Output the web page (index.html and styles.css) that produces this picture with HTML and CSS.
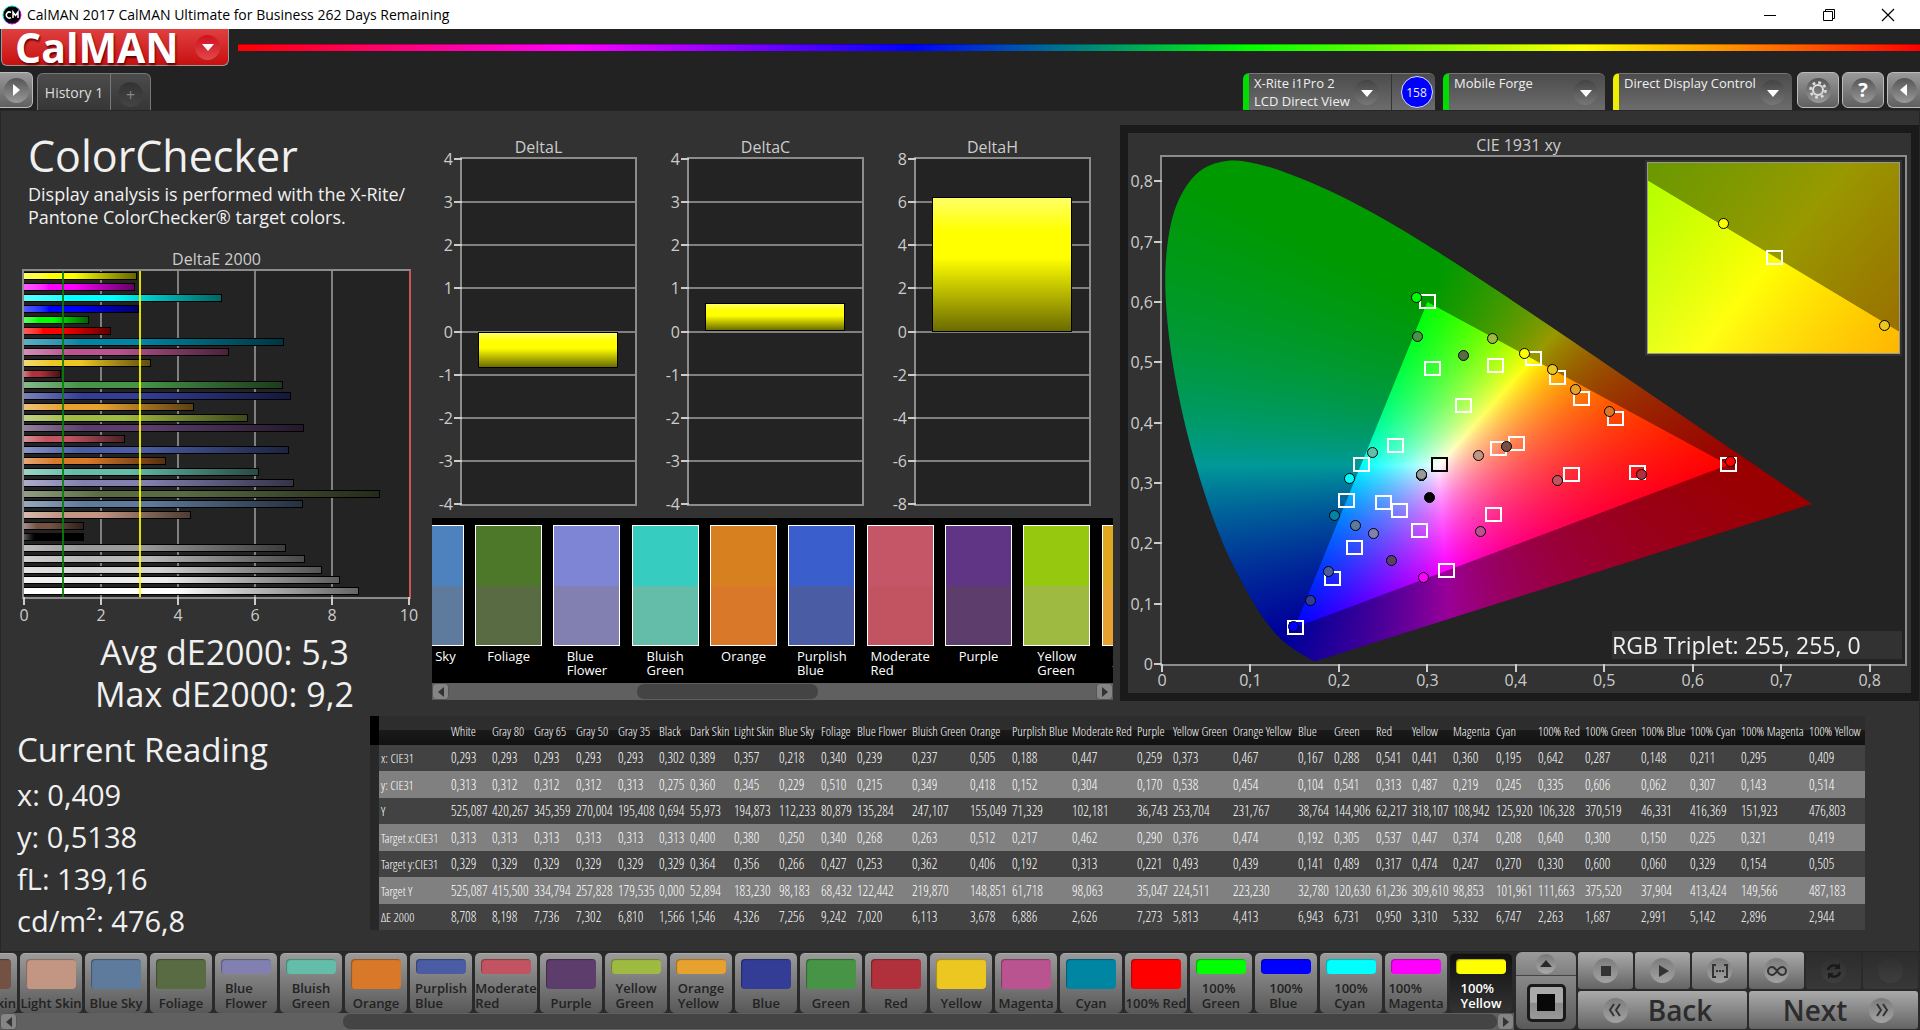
FILE: index.html
```html
<!DOCTYPE html>
<html lang="en">
<head>
<meta charset="utf-8">
<title>CalMAN 2017 CalMAN Ultimate for Business</title>
<link rel="stylesheet" href="styles.css">
</head>
<body>
<div class="app">
  <header class="titlebar">
    <svg class="app-icon" width="20" height="20" viewBox="0 0 20 20" aria-hidden="true">
      <defs><linearGradient id="ring" x1="0" y1="0" x2="1" y2="1"><stop offset="0" stop-color="#0c3"/><stop offset=".35" stop-color="#0cf"/><stop offset=".65" stop-color="#c0f"/><stop offset="1" stop-color="#f0a"/></linearGradient></defs>
      <circle cx="10" cy="10" r="9" fill="#000" stroke="url(#ring)"/>
      <path d="M9 7.500A3 3 0 1 0 9 12.500M11 13V7l2.500 3.500L16 7v6" fill="none" stroke="#fff" stroke-width="1.500"/>
    </svg>
    <span class="app-title">CalMAN 2017 CalMAN Ultimate for Business 262 Days Remaining</span>
    <div class="window-buttons">
      <button aria-label="Minimize"><svg width="14" height="14" viewBox="0 0 14 14"><path d="M1 7.500h12" stroke="#000"/></svg></button>
      <button aria-label="Restore"><svg width="14" height="14" viewBox="0 0 14 14" fill="none" stroke="#000"><path d="M1.500 3.500h9v9h-9zM3.500 3.500v-2h9v9h-2"/></svg></button>
      <button aria-label="Close"><svg width="14" height="14" viewBox="0 0 14 14"><path d="M1 1l12 12M13 1L1 13" stroke="#000" stroke-width="1.200"/></svg></button>
    </div>
  </header>

  <div class="brand-row">
    <button class="brand">CalMAN
      <span class="disc disc-red"><svg width="14" height="14" viewBox="0 0 14 14"><path d="M1 4h12L7 11z" fill="#fff"/></svg></span>
    </button>
    <div class="spectrum"></div>
  </div>

  <nav class="tabs-row">
    <button class="square-button edge-left" aria-label="Expand"><span class="disc"><svg width="12" height="14" viewBox="0 0 12 14"><path d="M3 1v12l7-6z" fill="#fff"/></svg></span></button>
    <div class="tabs">
      <button class="tab">History 1</button>
      <button class="tab tab-add" aria-label="Add tab"><span class="disc disc-dark">+</span></button>
    </div>
    <div class="devices">
      <div class="device device-meter">
        <button class="device-main"><span>X-Rite i1Pro 2<br>LCD Direct View</span><span class="disc disc-drop"><svg width="14" height="14" viewBox="0 0 14 14"><path d="M1 4h12L7 11z" fill="#fff"/></svg></span></button>
        <div class="device-count"><span>158</span></div>
      </div>
      <div class="device device-source">
        <button class="device-main"><span>Mobile Forge</span><span class="disc disc-drop"><svg width="14" height="14" viewBox="0 0 14 14"><path d="M1 4h12L7 11z" fill="#fff"/></svg></span></button>
      </div>
      <div class="device device-display">
        <button class="device-main"><span>Direct Display Control</span><span class="disc disc-drop"><svg width="14" height="14" viewBox="0 0 14 14"><path d="M1 4h12L7 11z" fill="#fff"/></svg></span></button>
      </div>
      <div class="tools">
        <button class="square-button" aria-label="Settings"><span class="disc"><svg width="20" height="20" viewBox="0 0 20 20" fill="none" stroke="#ddd"><circle cx="10" cy="10" r="5" stroke-width="2"/><circle cx="10" cy="10" r="7.500" stroke-width="2.500" stroke-dasharray="2.900 2.990"/></svg></span></button>
        <button class="square-button" aria-label="Help"><span class="disc help">?</span></button>
        <button class="square-button edge-right" aria-label="Collapse"><span class="disc"><svg width="12" height="14" viewBox="0 0 12 14"><path d="M9 1v12L2 7z" fill="#fff"/></svg></span></button>
      </div>
    </div>
  </nav>

  <main class="workspace">
    <div class="upper">
      <section class="summary">
        <h1>ColorChecker</h1>
        <p class="intro">Display analysis is performed with the X-Rite/<br>Pantone ColorChecker® target colors.</p>
        <h2 class="chart-title">DeltaE 2000</h2>
        <div class="plot de-plot" id="de-plot"></div>
        <div class="totals"><div>Avg dE2000: 5,3</div><div>Max dE2000: 9,2</div></div>
      </section>

      <section class="center">
        <div class="deltas" id="deltas"></div>
        <div class="strip">
          <div class="strip-view"><div class="strip-track" id="strip"></div></div>
          <div class="scrollbar">
            <button aria-label="Scroll left"><svg width="10" height="12" viewBox="0 0 10 12"><path d="M8 1v10L2 6z" fill="#333"/></svg></button>
            <div class="scroll-track"><div class="scroll-thumb thumb-strip"></div></div>
            <button aria-label="Scroll right"><svg width="10" height="12" viewBox="0 0 10 12"><path d="M2 1v10l6-5z" fill="#333"/></svg></button>
          </div>
        </div>
      </section>

      <section class="cie">
        <h2 class="chart-title">CIE 1931 xy</h2>
        <div class="plot cie-plot" id="cie-plot">
          <canvas class="gamut" id="gamut" width="1490" height="1012"></canvas>
          <div class="inset"><div class="inset-plot" id="inset-plot"><canvas class="gamut" id="inset" width="504" height="382"></canvas></div></div>
          <div class="triplet">RGB Triplet: 255, 255, 0</div>
        </div>
      </section>
    </div>

    <div class="lower">
      <section class="reading">
        <h2>Current Reading</h2>
        <div>x: 0,409</div>
        <div>y: 0,5138</div>
        <div>fL: 139,16</div>
        <div>cd/m²: 476,8</div>
      </section>
      <div class="table-wrap"><table class="data" id="data"></table></div>
    </div>
  </main>

  <footer class="bottom">
    <div class="patches">
      <div class="patch-row" id="patches"></div>
      <div class="scrollbar">
        <button aria-label="Scroll left"><svg width="10" height="12" viewBox="0 0 10 12"><path d="M8 1v10L2 6z" fill="#333"/></svg></button>
        <div class="scroll-track"><div class="scroll-thumb thumb-patches"></div></div>
        <button aria-label="Scroll right"><svg width="10" height="12" viewBox="0 0 10 12"><path d="M2 1v10l6-5z" fill="#333"/></svg></button>
      </div>
    </div>
    <div class="pattern">
      <button class="pattern-up" aria-label="More"><span class="disc disc-small"><svg width="14" height="12" viewBox="0 0 14 12"><path d="M1 9h12L7 2z" fill="#2a2a2a"/></svg></span></button>
      <button class="pattern-window" aria-label="Pattern window"><span class="window-frame"><span class="window-core"></span></span></button>
    </div>
    <div class="transport">
      <button aria-label="Stop"><span class="disc disc-light"><svg width="16" height="16" viewBox="0 0 16 16"><path d="M3 3h10v10H3z" fill="#333"/></svg></span></button>
      <button aria-label="Play"><span class="disc disc-light"><svg width="16" height="16" viewBox="0 0 16 16"><path d="M4 2v12l10-6z" fill="#333"/></svg></span></button>
      <button aria-label="Read series"><span class="disc disc-light"><svg width="18" height="18" viewBox="0 0 18 18" fill="none" stroke="#333" stroke-width="2"><path d="M5 3H2v12h3M13 3h3v12h-3M5 9h2M8 9h2M11 9h2"/></svg></span></button>
      <button aria-label="Continuous"><span class="disc disc-light"><svg width="20" height="12" viewBox="0 0 20 12" fill="none" stroke="#333" stroke-width="2"><path d="M10 6C8 3 7 2 5 2a4 4 0 0 0 0 8c2 0 3-1 5-4s3-4 5-4a4 4 0 0 1 0 8c-2 0-3-1-5-4z"/></svg></span></button>
      <button class="off" aria-label="Refresh"><span class="disc disc-off"><svg width="18" height="18" viewBox="0 0 18 18" fill="none" stroke="#1a1a1a" stroke-width="2.500"><path d="M3 8a6 6 0 0 1 10-3M15 10a6 6 0 0 1-10 3"/><path d="M15 1v6H9zM3 17v-6h6z" fill="#1a1a1a" stroke="none"/></svg></span></button>
      <button class="off" aria-label="Empty"><span class="disc disc-off"></span></button>
      <button class="step"><span class="disc disc-light"><svg width="16" height="16" viewBox="0 0 16 16" fill="none" stroke="#333" stroke-width="2"><path d="M7 2L3 8l4 6M13 2L9 8l4 6"/></svg></span>Back</button>
      <button class="step step-next">Next<span class="disc disc-light"><svg width="16" height="16" viewBox="0 0 16 16" fill="none" stroke="#333" stroke-width="2"><path d="M3 2l4 6-4 6M9 2l4 6-4 6"/></svg></span></button>
    </div>
  </footer>
</div>
<script src="app.js"></script>
</body>
</html>
```
FILE: styles.css
```css
* { box-sizing: border-box; }
body {
  margin: 0;
  background: #222;
  color: #f0f0f0;
  font-family: "Open Sans", "Noto Sans", sans-serif;
  font-size: 14px;
}
button { font: inherit; color: inherit; border: 0; padding: 0; background: none; }
h1, h2, p { margin: 0; font-weight: 400; }
svg { display: block; }

.app { min-height: 100vh; display: flex; flex-direction: column; overflow: hidden; }

/* window title bar */
.titlebar { height: 29px; background: #fff; color: #000; display: flex; align-items: center; padding: 0 3px 0 2px; gap: 5px; flex: none; }
.app-title { flex: 1; }
.window-buttons { display: flex; }
.window-buttons button { width: 59px; height: 29px; display: grid; place-items: center; }

/* brand */
.brand-row { display: flex; align-items: flex-start; gap: 9px; height: 43px; padding-left: 1px; }
.brand {
  width: 228px; height: 37px; display: flex; align-items: center; justify-content: space-between;
  padding: 0 8px 0 13px; color: #fff; font-size: 41px; font-weight: 700; line-height: 36px;
  background: linear-gradient(#e04040, #c81010); border: 1px solid #999; border-top: 0;
  border-radius: 0 0 6px 6px; text-shadow: 1px 2px 2px #600;
}
.spectrum { flex: 1; height: 7px; margin-top: 15px; background: linear-gradient(90deg, #f00, #f0f, #00f, #0f0, #ff0, #f00); border-top: 1px solid rgba(0,0,0,.3); }

.disc {
  width: 25px; height: 25px; border-radius: 50%; flex: none;
  display: grid; place-items: center;
  background: linear-gradient(#555, #999);
}
.disc-red { background: linear-gradient(#d01020, #e04848); }
.disc-dark { background: linear-gradient(#333, #444); color: #888; font-size: 16px; line-height: 16px; }
.disc-drop { background: linear-gradient(#444, #777); }
.disc-small { width: 20px; height: 20px; background: linear-gradient(#777, #aaa); }
.disc-light { background: linear-gradient(#7c7c7c, #a2a2a2); }
.disc-off { background: linear-gradient(#303030, #3e3e3e); }
.help { color: #fff; font-weight: 700; font-size: 20px; line-height: 24px; }

/* tabs and devices */
.tabs-row { display: flex; height: 38px; align-items: flex-start; gap: 4px; }
.square-button {
  width: 42px; height: 36px; display: grid; place-items: center; flex: none;
  border: 1px solid #bbb; border-radius: 6px; background: linear-gradient(#999, #606060);
}
.edge-left { width: 33px; border-left: 0; border-radius: 0 6px 6px 0; }
.edge-right { width: 33px; border-right: 0; border-radius: 6px 0 0 6px; }
.tabs { display: flex; margin-top: 1px; height: 37px; border: 1px solid #777; border-bottom: 0; border-radius: 6px 6px 0 0; background: linear-gradient(#4c4c4c, #363636); }
.tab { width: 72px; color: #ddd; }
.tab-add { width: 40px; border-left: 1px solid #777; display: grid; place-items: center; padding-top: 5px; }
.devices { margin-left: auto; display: flex; gap: 8px; }
.device { display: flex; margin-top: 1px; height: 37px; border-radius: 6px 6px 0 0; overflow: hidden; background: linear-gradient(#4c4c4c, #6c6c6c); border-top: 1px solid #777; border-left: 6px solid #0d0; }
.device-meter { width: 192px; }
.device-source { width: 162px; }
.device-display { width: 179px; border-left-color: #ee0; margin-right: -3px; }
.device-main { flex: 1; display: flex; align-items: flex-start; justify-content: space-between; text-align: left; padding: 0 7px 0 5px; line-height: 18px; font-size: 13px; white-space: nowrap; }
.device-main .disc { margin-top: 6px; }
.device-meter .device-main { padding-right: 12px; }
.device-count { width: 44px; border-left: 1px solid #333; display: grid; place-items: center; padding-left: 6px; }
.device-count span { width: 32px; height: 32px; border-radius: 50%; background: #00f; border: 1px solid #ddf; display: grid; place-items: center; font-size: 12px; }
.tools { display: flex; gap: 3px; }

/* workspace */
.workspace { flex: 1; background: #323232; border: 1px solid #262626; }
.upper { display: grid; grid-template-columns: 431px minmax(0, 681fr) minmax(0, 806fr); height: 590px; }
.summary h1 { margin: 18px 0 0 27px; font-size: 43px; line-height: 54px; }
.intro { margin: 0 0 0 27px; font-size: 18px; line-height: 23px; padding: 0 0 20px; white-space: nowrap; }
.chart-title { font-size: 16px; line-height: 20px; text-align: center; color: #ccc; }
.summary .chart-title, .delta-title { line-height: 20px; }
.plot { position: relative; background: #232323; border: 2px solid #8c8c8c; }
.axis-label { position: absolute; font-size: 16px; line-height: 20px; color: #ccc; white-space: nowrap; }
.label-x { top: 100%; margin-top: 8px; transform: translateX(-50%); }
.label-y { right: 100%; margin-right: 9px; transform: translateY(-50%); }
.tick-x { position: absolute; top: 100%; width: 2px; height: 8px; margin-left: -1px; background: #ccc; }
.tick-y { position: absolute; right: 100%; height: 2px; width: 8px; margin-top: -1px; background: #ccc; }
.grid-x { position: absolute; top: 0; bottom: 0; width: 2px; margin-left: -1px; background: #808080; }
.grid-y { position: absolute; left: 0; right: 0; height: 2px; margin-top: -1px; background: #808080; }
.limit-good { background: #0a7d0a; opacity: .9; }
.limit-warn { background: #ff0; opacity: .85; }

.de-plot { height: 330px; margin: 0 21px 0 21px; border-right-color: #c55; }
.de-bars { position: relative; height: 100%; display: flex; flex-direction: column; justify-content: space-around; }
.de-bar { height: 8px; border: 1px solid #000; border-left: 0; }
.totals { margin-top: 32px; padding-left: 16px; text-align: center; font-size: 34px; line-height: 42px; }

.deltas { display: grid; grid-template-columns: repeat(3, minmax(0, 1fr)); padding-top: 26px; }
.delta-title { padding-right: 14px; }
.delta-plot { height: 349px; margin: 0 22px 0 28px; }
.delta-bar { position: absolute; left: 9%; right: 10%; border: 1px solid #000; background: linear-gradient(#ffff66, #ff0 25%, #ff0 45%, #6b6b00); }

.strip { margin-top: 12px; background: #000; }
.strip-view { height: 165px; overflow: hidden; }
.strip-track { display: flex; width: 100%; padding-top: 7px; margin-left: -6%; }
.sample { flex: 0 0 11.5%; display: flex; flex-direction: column; align-items: center; gap: 3px; font-size: 13px; line-height: 14px; color: #fff; white-space: nowrap; }
.sample-color { width: 67px; height: 121px; border: 1px solid #fff; display: grid; }

.scrollbar { height: 17px; display: flex; align-items: stretch; background: #606060; }
.scrollbar button { width: 17px; background: #858585; border: 1px solid #555; border-radius: 4px; display: grid; place-items: center; }
.scroll-track { flex: 1; padding: 1px 0; display: flex; }
.scroll-thumb { background: #444; border-radius: 7px; }
.thumb-strip { width: 28%; margin-left: 29%; }
.thumb-patches { flex: 1; margin-left: 22%; }

.cie { margin: 14px 0 0 7px; border: 8px solid #1a1a1a; padding: 2px 4px 27px 32px; height: 576px; display: flex; flex-direction: column; }
.cie .chart-title { padding-right: 30px; }
.cie .label-x { margin-top: 6px; }
.cie-plot { flex: 1; }
.gamut { position: absolute; left: 0; top: 0; width: 100%; height: 100%; }
.target { position: absolute; width: 17px; height: 15px; margin: -8px 0 0 -8px; border: 2px solid #fff; }
.target-white { border-color: #000; }
.measured { position: absolute; width: 11px; height: 11px; margin: -6px 0 0 -5px; border: 1px solid #000; border-radius: 50%; }
.inset { position: absolute; right: 3px; top: 3px; width: 257px; height: 196px; padding: 2px; background: #323232; }
.inset-plot { position: relative; height: 100%; border: 1px solid #999; overflow: hidden; }
.triplet { position: absolute; right: 3px; bottom: 5px; width: 290px; font-size: 23px; line-height: 28px; background: #323232; }

/* readings and table */
.lower { display: grid; grid-template-columns: 369px minmax(0, 1fr); padding: 15px 55px 8px 0; }
.reading { padding-left: 16px; font-size: 29px; line-height: 42px; padding-top: 12px; }
.reading h2 { font-size: 33px; line-height: 44px; margin-bottom: 2px; }
.data { width: 100%; table-layout: fixed; border-collapse: collapse; font-family: "Open Sans Condensed Light", "Open Sans Condensed", sans-serif; font-weight: 300; font-size: 14px; line-height: 16px; color: #fff; }
.data th, .data td { padding: 0 0 0 2px; text-align: left; font-weight: 300; white-space: nowrap; }
.data th { font-size: 13px; }
.data thead tr { height: 29px; background: linear-gradient(#2d2d2d 48%, #1a1a1a 50%, #111); }
.data tbody tr { height: 26px; background: #424242; }
.data tbody tr:nth-child(even) { height: 27px; background: #808080; }
.data .gutter { background: #282828; }
.data thead .gutter { background: #000; }

/* bottom bar */
.bottom { display: flex; height: 78px; background: #2a2a2a; gap: 2px; padding-right: 2px; }
.patches { flex: 1; min-width: 0; }
.patch-row { display: flex; justify-content: flex-end; gap: 3px; height: 61px; padding: 1px 2px 0 0; overflow: hidden; }
.patch {
  flex: 0 0 62px; height: 60px; padding: 5px 0 2px; border-radius: 5px; overflow: hidden;
  display: flex; flex-direction: column; align-items: center; justify-content: space-between;
  background: linear-gradient(#9a9a9a, #585858); color: #222; border-top: 1px solid #aaa;
  font-size: 13px; line-height: 15px; font-weight: 600; white-space: nowrap; text-align: left;
}
.patch-color { width: 50px; height: 30px; border-radius: 4px; box-shadow: inset 1px 1px 1px rgba(0,0,0,.3); flex: none; }
.patch-two .patch-color { height: 15px; }
.patch-active { background: linear-gradient(#111, #333); color: #fff; border-color: #222; }
.pattern { width: 60px; display: flex; flex-direction: column; height: 77px; border-radius: 6px; overflow: hidden; }
.pattern-up { height: 24px; display: grid; place-items: center; background: linear-gradient(#999, #808080); border-bottom: 1px solid #444; }
.pattern-window { flex: 1; display: grid; place-items: center; background: linear-gradient(#888, #5a5a5a); }
.window-frame { width: 39px; height: 38px; border: 3px solid #1a1a1a; border-radius: 5px; display: grid; place-items: center; background: linear-gradient(#aaa 48%, #8a8a8a 50%, #999); }
.window-core { width: 18px; height: 17px; background: #080808; }
.transport { display: grid; grid-template-columns: repeat(6, 55px); gap: 2px; grid-template-rows: 37px 38px; width: 340px; }
.transport button { display: flex; align-items: center; justify-content: center; background: linear-gradient(#aaa, #646464); border-radius: 3px; }
.transport .off { background: linear-gradient(#2c2c2c, #383838); }
.transport .step { grid-column: span 3; font-size: 28px; font-weight: 600; color: #2c2c2c; gap: 20px; line-height: 36px; padding-right: 10px; }
.transport .step-next { gap: 22px; padding: 0 0 0 10px; }
```
FILE: app.js
```js
// name, x, y, Y, target x, target y, target Y, dE, colour, column width
const samples = [
  ["White","0,293","0,313","525,087","0,313","0,329","525,087","8,708","#ffffff",41],
  ["Gray 80","0,293","0,312","420,267","0,313","0,329","415,500","8,198","#ececec",42],
  ["Gray 65","0,293","0,312","345,359","0,313","0,329","334,794","7,736","#d4d4d4",42],
  ["Gray 50","0,293","0,312","270,004","0,313","0,329","257,828","7,302","#b8b8b8",42],
  ["Gray 35","0,293","0,313","195,408","0,313","0,329","179,535","6,810","#9a9a9a",41],
  ["Black","0,302","0,275","0,694","0,313","0,329","0,000","1,566","#000000",31],
  ["Dark Skin","0,389","0,360","55,973","0,400","0,364","52,894","1,546","#735244",44],
  ["Light Skin","0,357","0,345","194,873","0,380","0,356","183,230","4,326","#c29682",45],
  ["Blue Sky","0,218","0,229","112,233","0,250","0,266","98,183","7,256","#5e7a9c",42],
  ["Foliage","0,340","0,510","80,879","0,340","0,427","68,432","9,242","#596b42",36],
  ["Blue Flower","0,239","0,215","135,284","0,268","0,253","122,442","7,020","#8280b0",55],
  ["Bluish Green","0,237","0,349","247,107","0,263","0,362","219,870","6,113","#63bda9",58],
  ["Orange","0,505","0,418","155,049","0,512","0,406","148,851","3,678","#d97829",42],
  ["Purplish Blue","0,188","0,152","71,329","0,217","0,192","61,718","6,886","#4a5ca3",60],
  ["Moderate Red","0,447","0,304","102,181","0,462","0,313","98,063","2,626","#c25461",65],
  ["Purple","0,259","0,170","36,743","0,290","0,221","35,047","7,273","#5c3d6b",36],
  ["Yellow Green","0,373","0,538","253,704","0,376","0,493","224,511","5,813","#9fba40",60],
  ["Orange Yellow","0,467","0,454","231,767","0,474","0,439","223,230","4,413","#e6a12e",65],
  ["Blue","0,167","0,104","38,764","0,192","0,141","32,780","6,943","#333d96",36],
  ["Green","0,288","0,541","144,906","0,305","0,489","120,630","6,731","#479447",42],
  ["Red","0,541","0,313","62,217","0,537","0,317","61,236","0,950","#b0303b",36],
  ["Yellow","0,441","0,487","318,107","0,447","0,474","309,610","3,310","#edc721",41],
  ["Magenta","0,360","0,219","108,942","0,374","0,247","98,853","5,332","#ba5491",43],
  ["Cyan","0,195","0,245","125,920","0,208","0,270","101,961","6,747","#0085a3",42],
  ["100% Red","0,642","0,335","106,328","0,640","0,330","111,663","2,263","#ff0000",47],
  ["100% Green","0,287","0,606","370,519","0,300","0,600","375,520","1,687","#00ff00",56],
  ["100% Blue","0,148","0,062","46,331","0,150","0,060","37,904","2,991","#0000ff",49],
  ["100% Cyan","0,211","0,307","416,369","0,225","0,329","413,424","5,142","#00ffff",51],
  ["100% Magenta","0,295","0,143","151,923","0,321","0,154","149,566","2,896","#ff00ff",68],
  ["100% Yellow","0,409","0,514","476,803","0,419","0,505","487,183","2,944","#ffff00",58]
];
const num = s => parseFloat(s.replace(",", "."));
const byId = id => document.getElementById(id);

// DeltaE 2000 chart
let html = "";
for (let v = 0; v <= 10; v += 2) {
  const p = v * 10 + "%";
  if (v > 0 && v < 10) html += `<i class="grid-x" style="left:${p}"></i>`;
  html += `<i class="tick-x" style="left:${p}"></i><span class="axis-label label-x" style="left:${p}">${v}</span>`;
}
html += '<div class="de-bars">' + [...samples].reverse().map(s =>
  `<div class="de-bar" style="width:${num(s[7]) * 10}%;background:linear-gradient(90deg,color-mix(in srgb,${s[8]},#fff 35%),${s[8]} 22%,${s[8]} 45%,color-mix(in srgb,${s[8]},#000 60%))"></div>`).join("") + "</div>";
html += '<i class="grid-x limit-good" style="left:10%"></i><i class="grid-x limit-warn" style="left:30%"></i>';
byId("de-plot").innerHTML = html;

// DeltaL, DeltaC and DeltaH charts
byId("deltas").innerHTML = [["DeltaL", 4, -0.84], ["DeltaC", 4, 0.67], ["DeltaH", 8, 6.25]].map(([name, max, value]) => {
  let out = "";
  for (let i = 0; i <= 8; i++) {
    const p = i * 12.5 + "%", v = max - i * max / 4;
    if (i > 0 && i < 8) out += `<i class="grid-y" style="top:${p}"></i>`;
    out += `<i class="tick-y" style="top:${p}"></i><span class="axis-label label-y" style="top:${p}">${v}</span>`;
  }
  const top = 50 - Math.max(value, 0) / max * 50, height = Math.abs(value) / max * 50;
  return `<div><h2 class="chart-title delta-title">${name}</h2><div class="plot delta-plot">${out}<div class="delta-bar" style="top:${top}%;height:${height}%"></div></div></div>`;
}).join("");

// measured over target strip
byId("strip").innerHTML = [
  ["Blue Sky", "#4d82bf", "#5e7a9c"], ["Foliage", "#4d7829", "#596b42"], ["Blue<br>Flower", "#7d85d4", "#8280b0"],
  ["Bluish<br>Green", "#36ccc0", "#63bda9"], ["Orange", "#d68020", "#d97829"], ["Purplish<br>Blue", "#3a5fcc", "#4a5ca3"],
  ["Moderate<br>Red", "#c45668", "#c25461"], ["Purple", "#603585", "#5c3d6b"], ["Yellow<br>Green", "#96c810", "#9fba40"],
  ["Orange<br>Yellow", "#dfa820", "#e6a12e"]
].map(([n, a, b]) => `<div class="sample"><div class="sample-color"><span style="background:${a}"></span><span style="background:${b}"></span></div><span>${n}</span></div>`).join("");

// data table
const rows = ["x: CIE31", "y: CIE31", "Y", "Target x:CIE31", "Target y:CIE31", "Target Y", "ΔE 2000"];
byId("data").innerHTML =
  '<colgroup><col style="width:9px"><col style="width:70px">' + samples.map(s => `<col style="width:${s[9]}px">`).join("") + "</colgroup>" +
  '<thead><tr><th class="gutter"></th><th></th>' + samples.map(s => `<th scope="col">${s[0]}</th>`).join("") + "</tr></thead><tbody>" +
  rows.map((r, i) => `<tr><td class="gutter"></td><th scope="row">${r}</th>` + samples.map(s => `<td>${s[i + 1]}</td>`).join("") + "</tr>").join("") + "</tbody>";

// patch buttons
const twoLine = new Set(["Blue Flower", "Bluish Green", "Purplish Blue", "Moderate Red", "Yellow Green", "Orange Yellow", "100% Green", "100% Blue", "100% Cyan", "100% Magenta", "100% Yellow"]);
byId("patches").innerHTML = samples.slice(6).map(s => {
  const two = twoLine.has(s[0]);
  const cls = "patch" + (two ? " patch-two" : "") + (s[0] === "100% Yellow" ? " patch-active" : "");
  return `<button class="${cls}"><span class="patch-color" style="background:${s[8]}"></span><span>${two ? s[0].replace(" ", "<br>") : s[0]}</span></button>`;
}).join("");

// chromaticity diagrams
const locus = [[.1741,.005],[.1733,.0048],[.1714,.0051],[.1689,.0069],[.1644,.0109],[.1566,.0177],[.144,.0297],[.1355,.0399],[.1241,.0578],[.1096,.0868],[.0913,.1327],[.0687,.2007],[.0454,.295],[.0235,.4127],[.0082,.5384],[.0039,.6548],[.0139,.7502],[.0389,.812],[.0743,.8338],[.1142,.8262],[.1547,.8059],[.1929,.7816],[.2296,.7543],[.2658,.7243],[.3016,.6923],[.3373,.6589],[.3731,.6245],[.4087,.5896],[.4441,.5547],[.4788,.5202],[.5125,.4866],[.5448,.4544],[.5752,.4242],[.6029,.3965],[.627,.3725],[.6658,.334],[.6915,.3083],[.714,.2859],[.7347,.2653]];
const triangle = [[.64,.33],[.3,.6],[.15,.06]];

function paint(canvas, x0, x1, y0, y1) {
  const w = canvas.width, h = canvas.height, ctx = canvas.getContext("2d");
  const layer = scale => {
    const c = document.createElement("canvas");
    c.width = w; c.height = h;
    const g = c.getContext("2d"), img = g.createImageData(w, h);
    for (let j = 0; j < h; j++) for (let i = 0; i < w; i++) {
      const x = x0 + (i + .5) / w * (x1 - x0), y = Math.max(y1 - (j + .5) / h * (y1 - y0), 1e-4), z = 1 - x - y;
      const r = Math.max(0, 3.2406 * x - 1.5372 * y - .4986 * z);
      const gr = Math.max(0, -.9689 * x + 1.8758 * y + .0415 * z);
      const b = Math.max(0, .0557 * x - .204 * y + 1.057 * z);
      const k = 255 * scale / Math.max(r, gr, b), o = (j * w + i) * 4;
      img.data[o] = r * k; img.data[o + 1] = gr * k; img.data[o + 2] = b * k; img.data[o + 3] = 255;
    }
    g.putImageData(img, 0, 0);
    return c;
  };
  const clip = (points, source) => {
    ctx.save();
    ctx.beginPath();
    points.forEach(([x, y]) => ctx.lineTo((x - x0) / (x1 - x0) * w, (y1 - y) / (y1 - y0) * h));
    ctx.closePath(); ctx.clip();
    ctx.drawImage(source, 0, 0);
    ctx.restore();
  };
  // rounds the corners between the sampled wavelengths
  const smooth = [];
  for (let i = 0; i < locus.length - 1; i++) {
    const a = locus[Math.max(i - 1, 0)], b = locus[i], c = locus[i + 1], d = locus[Math.min(i + 2, locus.length - 1)];
    for (let t = 0; t < 1; t += .125) smooth.push([0, 1].map(k =>
      .5 * (2 * b[k] + (c[k] - a[k]) * t + (2 * a[k] - 5 * b[k] + 4 * c[k] - d[k]) * t * t + (3 * b[k] - a[k] - 3 * c[k] + d[k]) * t * t * t)));
  }
  smooth.push(locus[locus.length - 1]);
  clip(smooth, layer(.6));
  clip(triangle, layer(1));
}
const marks = (list, x0, x1, y0, y1) => {
  const at = (x, y) => `left:${(num(x) - x0) / (x1 - x0) * 100}%;top:${(y1 - num(y)) / (y1 - y0) * 100}%`;
  return list.map(s => `<i class="target${s[4] === "0,313" ? " target-white" : ""}" style="${at(s[4], s[5])}"></i>`).join("") +
    list.map(s => `<i class="measured" style="${at(s[1], s[2])};background:${s[8]}"></i>`).join("");
};
paint(byId("gamut"), 0, .84, 0, .84);
paint(byId("inset"), .394, .444, .48, .53);
let axes = "";
for (let i = 0; i <= 8; i++) {
  const p = i / 8.4 * 100, label = i ? "0," + i : "0";
  axes += `<i class="tick-x" style="left:${p}%"></i><span class="axis-label label-x" style="left:${p}%">${label}</span>`;
  axes += `<i class="tick-y" style="top:${100 - p}%"></i><span class="axis-label label-y" style="top:${100 - p}%">${label}</span>`;
}
byId("gamut").insertAdjacentHTML("afterend", axes + marks(samples, 0, .84, 0, .84));
byId("inset").insertAdjacentHTML("afterend", marks([samples[21], samples[29]], .394, .444, .48, .53));
```
